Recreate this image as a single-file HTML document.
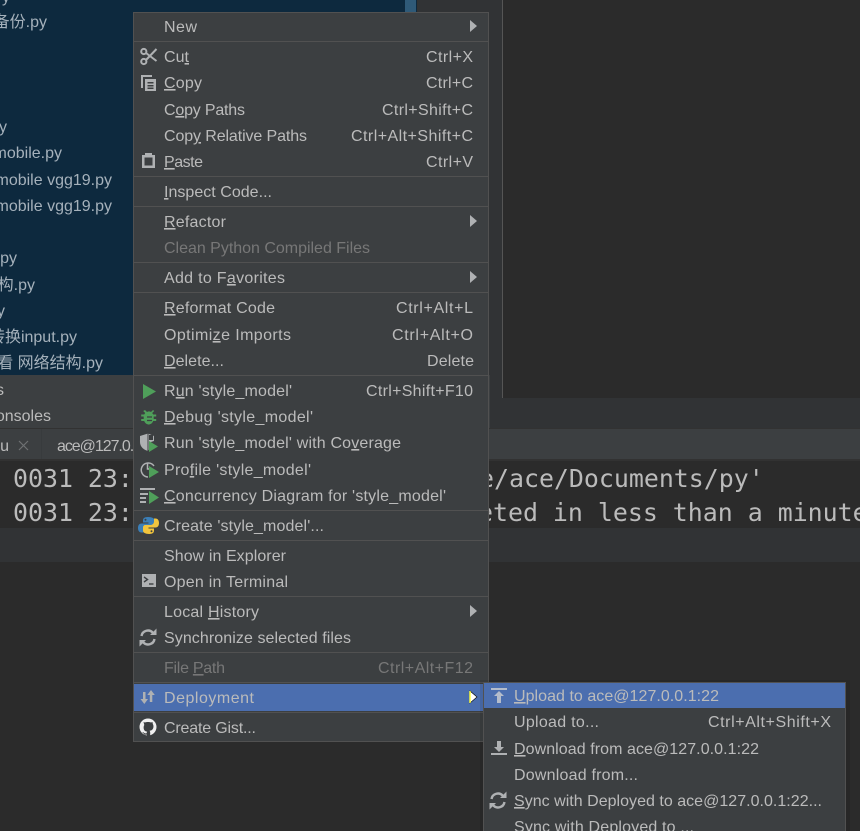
<!DOCTYPE html>
<html><head><meta charset="utf-8">
<style>
html,body{margin:0;padding:0;background:#2b2b2b;width:860px;height:831px;overflow:hidden}
svg{display:block;position:absolute;left:0;top:0}
text{font-family:"Liberation Sans","Noto Sans CJK SC",sans-serif;font-size:16px;fill:#bbbbbb;white-space:pre}
.t{fill:#a5b1bb}
.m{font-family:"DejaVu Sans Mono",monospace;font-size:24.9px;fill:#bbbbbb}
.d{fill:#777777}
.i{fill:#afb1b3}
.g{fill:#4f9f5a}
tspan.u{text-decoration:underline}
</style></head>
<body>
<svg width="860" height="831" viewBox="0 0 860 831" xmlns="http://www.w3.org/2000/svg">
<!-- backgrounds -->
<rect width="860" height="831" fill="#2b2b2b"/>
<rect x="418" y="0" width="84" height="398" fill="#313335"/>
<rect x="502" y="0" width="1" height="398" fill="#555555"/>
<rect x="0" y="0" width="417" height="375" fill="#0d293e"/>
<rect x="417" y="0" width="1" height="398" fill="#323232"/>
<rect x="405" y="0" width="11" height="12" fill="#2f5a78"/>
<rect x="0" y="375" width="490" height="53" fill="#3c3f41"/>
<rect x="490" y="398" width="370" height="31" fill="#313335"/>
<rect x="0" y="428" width="860" height="1" fill="#323232"/>
<rect x="0" y="429" width="860" height="31" fill="#3c3f41"/>
<rect x="41" y="429" width="1" height="31" fill="#383b3d"/>
<rect x="0" y="459" width="860" height="2" fill="#323232"/>
<rect x="0" y="461" width="860" height="67" fill="#2b2b2b"/>
<rect x="0" y="528" width="860" height="34" fill="#313335"/>

<!-- project tree -->
<text class="t" x="10" y="2" text-anchor="end">y</text>
<text class="t" x="47" y="27" text-anchor="end">备份.py</text>
<text class="t" x="7" y="132" text-anchor="end">y</text>
<text class="t" x="62" y="158" text-anchor="end">mobile.py</text>
<text class="t" x="112" y="185" text-anchor="end">mobile vgg19.py</text>
<text class="t" x="112" y="211" text-anchor="end">mobile vgg19.py</text>
<text class="t" x="17" y="263" text-anchor="end">py</text>
<text class="t" x="35" y="290" text-anchor="end">构.py</text>
<text class="t" x="5" y="316" text-anchor="end">y</text>
<text class="t" x="77" y="342" text-anchor="end">转换input.py</text>
<text class="t" x="103" y="368" text-anchor="end">查看 网络结构.py</text>
<text x="4" y="395" text-anchor="end">s</text>
<text x="51" y="421" text-anchor="end">onsoles</text>
<text x="9" y="451" text-anchor="end">u</text>
<path d="M19 441l9 9M28 441l-9 9" stroke="#6e7173" stroke-width="1.2" fill="none"/>
<text x="57" y="451" textLength="85">ace@127.0.0</text>

<!-- terminal -->
<text class="m" x="13" y="487">0031 23:</text>
<text class="m" x="13" y="521">0031 23:</text>
<text class="m" x="479" y="487">e/ace/Documents/py'</text>
<text class="m" x="478" y="521">eted in less than a minute</text>

<!-- main menu -->
<rect x="133.5" y="12.5" width="355" height="729" fill="#3c3f41" stroke="#515151"/>
<g fill="#515151">
<rect x="134" y="41" width="354" height="1"/><rect x="134" y="176" width="354" height="1"/>
<rect x="134" y="206" width="354" height="1"/><rect x="134" y="262" width="354" height="1"/>
<rect x="134" y="292" width="354" height="1"/><rect x="134" y="375" width="354" height="1"/>
<rect x="134" y="510" width="354" height="1"/><rect x="134" y="540" width="354" height="1"/>
<rect x="134" y="596" width="354" height="1"/><rect x="134" y="652" width="354" height="1"/>
<rect x="134" y="682" width="354" height="1"/><rect x="134" y="712" width="354" height="1"/>
</g>
<rect x="134" y="684" width="354" height="27" fill="#4b6eaf"/>

<text x="164" y="32" textLength="33">New</text>
<text x="164" y="62" textLength="25">Cu<tspan class="u">t</tspan></text>
<text x="164" y="88" textLength="38"><tspan class="u">C</tspan>opy</text>
<text x="164" y="115" textLength="81">C<tspan class="u">o</tspan>py Paths</text>
<text x="164" y="141" textLength="143">Cop<tspan class="u">y</tspan> Relative Paths</text>
<text x="164" y="167" textLength="39"><tspan class="u">P</tspan>aste</text>
<text x="164" y="197" textLength="108"><tspan class="u">I</tspan>nspect Code...</text>
<text x="164" y="227" textLength="62"><tspan class="u">R</tspan>efactor</text>
<text class="d" x="164" y="253" textLength="206">Clean Python Compiled Files</text>
<text x="164" y="283" textLength="121">Add to F<tspan class="u">a</tspan>vorites</text>
<text x="164" y="313" textLength="111"><tspan class="u">R</tspan>eformat Code</text>
<text x="164" y="340" textLength="127">Optimi<tspan class="u">z</tspan>e Imports</text>
<text x="164" y="366" textLength="60"><tspan class="u">D</tspan>elete...</text>
<text x="164" y="396" textLength="128">R<tspan class="u">u</tspan>n 'style_model'</text>
<text x="164" y="422" textLength="149"><tspan class="u">D</tspan>ebug 'style_model'</text>
<text x="164" y="448" textLength="237">Run 'style_model' with Co<tspan class="u">v</tspan>erage</text>
<text x="164" y="475" textLength="147">Pro<tspan class="u">f</tspan>ile 'style_model'</text>
<text x="164" y="501" textLength="282"><tspan class="u">C</tspan>oncurrency Diagram for 'style_model'</text>
<text x="164" y="531" textLength="160">Create 'style_model'...</text>
<text x="164" y="561" textLength="122">Show in Explorer</text>
<text x="164" y="587" textLength="124">Open in Terminal</text>
<text x="164" y="617" textLength="95">Local <tspan class="u">H</tspan>istory</text>
<text x="164" y="643" textLength="187">Synchronize selected files</text>
<text class="d" x="164" y="673" textLength="61">File <tspan class="u">P</tspan>ath</text>
<text x="164" y="703" textLength="90">Deployment</text>
<text x="164" y="733" textLength="92">Create Gist...</text>

<!-- shortcuts -->
<text x="426" y="62" textLength="47">Ctrl+X</text>
<text x="426" y="88" textLength="47">Ctrl+C</text>
<text x="382" y="115" textLength="91">Ctrl+Shift+C</text>
<text x="351" y="141" textLength="122">Ctrl+Alt+Shift+C</text>
<text x="426" y="167" textLength="47">Ctrl+V</text>
<text x="396" y="313" textLength="77">Ctrl+Alt+L</text>
<text x="392" y="340" textLength="81">Ctrl+Alt+O</text>
<text x="427" y="366" textLength="47">Delete</text>
<text x="366" y="396" textLength="107">Ctrl+Shift+F10</text>
<text class="d" x="378" y="673" textLength="95">Ctrl+Alt+F12</text>

<!-- submenu arrows -->
<g fill="#afb1b3">
<path d="M470 20l7 6-7 6z"/><path d="M470 215l7 6-7 6z"/><path d="M470 271l7 6-7 6z"/><path d="M470 605l7 6-7 6z"/>
</g>
<path d="M470 691l7 6-7 6z" fill="#fff" stroke="#000" stroke-width=".6"/>
<path d="M470 691v12" stroke="#ffff33" stroke-width="1.4"/>

<!-- icons -->
<g fill="none" stroke="#afb1b3" stroke-width="2">
<circle cx="143.800" cy="51.500" r="2.600"/><circle cx="143.800" cy="61.500" r="2.600"/>
<path d="M146 53l10.500 8M146 60l10.500-11"/>
</g>
<path d="M141 75h11v2h-9v11h-2z" class="i"/>
<path fill-rule="evenodd" class="i" d="M145 79h11v12h-11zM147.500 82v1.500h6V82zM147.500 85v1.500h6V85zM147.500 87.500V89h6v-1.500z"/>
<path fill-rule="evenodd" class="i" d="M142 155h3v-2h7v2h3v13h-13zM144.500 157.500v8h8v-8z"/>
<path class="g" d="M143 384l13 7.500-13 7.500z"/>
<path class="g" d="M145 410l2 2a4 4 0 0 1 4 0l2-2 1.200 1-2 2 1 1.500h3v2h-2.500v2.500h2.500v2h-3c-1 2.500-3 3.500-4.500 3.500s-3.500-1-4.500-3.500h-3v-2h2.500v-2.500h-2.500v-2h3l1-1.500-2-2z"/>
<path d="M147 417h5M147 420.500h5" stroke="#3c3f41" stroke-width="1.200"/>
<path class="i" d="M140 436l8-2.500 6 2.500v5l-3 1v5l-3 4c-4-1-8-4-8-9z"/>
<path d="M148 433.500v18" stroke="#3c3f41" stroke-width="1"/>
<path d="M149 435h4v5h-4z" fill="#3c3f41"/>
<path class="g" d="M149 441l9 5.500-9 5.500z"/>
<g fill="none" stroke="#afb1b3" stroke-width="1.500"><path d="M154 466a7 7 0 1 0-6 11"/><path d="M147.500 463v6h4"/></g>
<path class="g" d="M149 466l10 6-10 6z"/>
<path class="i" d="M140 488h15v2h-15zM140 493h8v2h-8zM140 497h6v2h-6zM140 501h6v2h-6z"/>
<path class="g" d="M149 491l10 6.500-10 6.500z"/>
<path fill="#3b7fb8" d="M148 517c-4 0-5 1.500-5 3.500v2h5.500v1h-7c-2 0-3.500 1.500-3.500 4.500s1.500 4.500 3.500 4.500h2v-3c0-2 1.500-3.500 3.500-3.500h5c1.500 0 2.500-1 2.500-2.500v-3c0-2-2-3.500-6.500-3.500zm-2.500 1.700a1 1 0 1 1 0 2 1 1 0 0 1 0-2z"/>
<path fill="#f2c53d" d="M149 534c4 0 5-1.500 5-3.500v-2h-5.500v-1h7c2 0 3.500-1.500 3.500-4.500s-1.500-4.500-3.500-4.500h-1.500v3c0 2-1.500 3.500-3.500 3.500h-5c-1.500 0-2.500 1-2.500 2.500v3c0 2 2 3.500 6.500 3.500zm2.500-1.700a1 1 0 1 1 0-2 1 1 0 0 1 0 2z"/>
<rect x="142" y="574" width="14" height="13" fill="#afb1b3"/>
<path d="M144 577l3.500 2.500-3.500 2.500" fill="none" stroke="#3c3f41" stroke-width="1.400"/>
<path d="M149 584h4.500" stroke="#3c3f41" stroke-width="1.400"/>
<g fill="none" stroke="#afb1b3" stroke-width="2.400">
<path d="M141.500 636a6.500 6.500 0 0 1 11.500-3"/><path d="M154.500 639a6.500 6.500 0 0 1-11.500 3"/>
</g>
<path class="i" d="M150 635h6.500v-6.500zM146 640h-6.500v6.500z"/>
<path class="i" d="M143 692h2.500v7h2.500l-3.700 5-3.800-5h2.500zM151 690l3.800 5h-2.500v7h-2.500v-7h-2.500z"/>
<circle cx="148" cy="727" r="8.500" fill="#f0f0f0"/>
<path fill="#3c3f41" d="M143.500 722.500l1.500.5c1.500-.6 4.500-.6 6 0l1.500-.5.300 2c.8 1 1 3.500 0 5s-2.500 1.700-3.300 1.700c.6.500.7 1.500.7 2.300v3h-3.400v-1.500c-1.500.3-2.800 0-3.400-1.300l-1.400-1 1.600.2 1 .8c.6.300 1.200.3 2 0 0-.5.200-1 .6-1.500-1-.1-2.400-.5-3-1.700-.8-1.500-.7-4 .1-5z" transform="translate(0 -.5)"/>

<!-- sub menu -->
<rect x="480" y="680" width="370" height="160" fill="#000" opacity=".08"/>
<rect x="483.500" y="682.500" width="362" height="160" fill="#3c3f41" stroke="#515151"/>
<rect x="484" y="683" width="361" height="25" fill="#4b6eaf"/>
<path d="M491 688h16v2h-16zM499 691l5 5h-3v7h-4v-7h-3z" fill="#b4bccb"/>
<path class="i" d="M497 741h4v6h3l-5 5-5-5h3zM491 753h16v2h-16z"/>
<g fill="none" stroke="#afb1b3" stroke-width="2.400">
<path d="M491.500 799a6.500 6.500 0 0 1 11.500-3"/><path d="M504.500 802a6.500 6.500 0 0 1-11.500 3"/>
</g>
<path class="i" d="M500 798h6.500v-6.500zM496 803h-6.500v6.500z"/>
<text x="514" y="701" textLength="205"><tspan class="u">U</tspan>pload to ace@127.0.0.1:22</text>
<text x="514" y="727" textLength="85">Upload to...</text>
<text x="708" y="727" textLength="123">Ctrl+Alt+Shift+X</text>
<text x="514" y="754" textLength="245"><tspan class="u">D</tspan>ownload from ace@127.0.0.1:22</text>
<text x="514" y="780" textLength="124">Download from...</text>
<text x="514" y="806" textLength="308"><tspan class="u">S</tspan>ync with Deployed to ace@127.0.0.1:22...</text>
<text x="514" y="832" textLength="180">Sync with Deployed to ...</text>
</svg>
</body></html>
